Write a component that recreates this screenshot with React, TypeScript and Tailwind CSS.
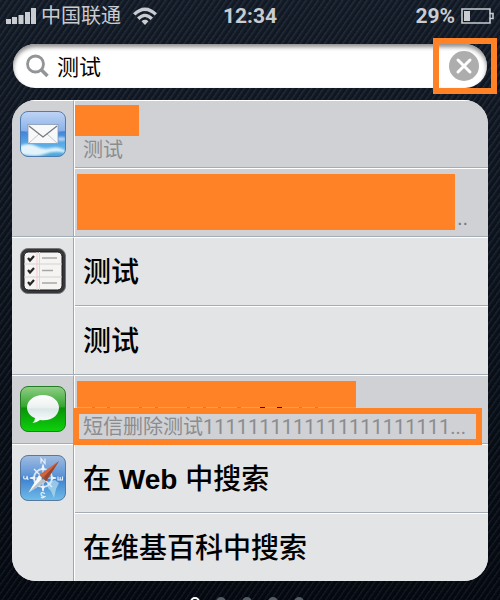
import { useState } from "react";
import type { ReactNode } from "react";

function SignalIcon() {
    return (
        <svg viewBox="0 0 31 16" className="h-4 w-[31px] fill-[#c9ccd1]" aria-hidden="true">
            <rect x="0" y="11" width="5" height="5" />
            <rect x="6" y="9" width="5" height="7" />
            <rect x="12.500" y="7" width="5" height="9" />
            <rect x="19" y="4" width="5" height="12" />
            <rect x="25" y="0" width="5" height="16" />
        </svg>
    );
}

function WifiIcon() {
    return (
        <svg viewBox="0 0 24 18" className="h-[18px] w-6" fill="none" stroke="#c9ccd1" strokeWidth="3.4" aria-hidden="true">
            <path d="M1.200 7.400Q12 -3 22.800 7.400" />
            <path d="M5.200 11.800Q12 5 18.800 11.800" />
            <path d="M12 18L8.500 14.300Q12 11.400 15.500 14.300Z" fill="#c9ccd1" stroke="none" />
        </svg>
    );
}

function BatteryIcon() {
    return (
        <svg viewBox="0 0 33 16" className="h-4 w-[33px]" fill="none" aria-hidden="true">
            <path d="M1 1H29V5.5H32V10.5H29V15H1Z" stroke="#c9ccd1" strokeWidth="1.6" />
            <path d="M29 5.5V10.5" stroke="#c9ccd1" strokeWidth="1.4" />
            <rect x="3" y="3" width="6" height="10" fill="#c9ccd1" />
        </svg>
    );
}

function MailIcon() {
    return (
        <svg viewBox="0 0 46 46" className="size-[46px]" aria-hidden="true">
            <defs>
                <linearGradient id="mailSky" x1="0" y1="0" x2="0" y2="1">
                    <stop offset="0" stopColor="#b4cdf3" />
                    <stop offset="0.42" stopColor="#78a6e6" />
                    <stop offset="0.45" stopColor="#4484da" />
                    <stop offset="0.8" stopColor="#5fb4e9" />
                    <stop offset="1" stopColor="#4ba6dd" />
                </linearGradient>
                <clipPath id="mailClip"><rect x="1" y="1" width="44" height="44" rx="7" /></clipPath>
                <filter id="mailCloud"><feGaussianBlur stdDeviation="1.2" /></filter>
            </defs>
            <rect x="0.5" y="0.5" width="45" height="45" rx="7.5" fill="url(#mailSky)" stroke="#4d7db0" />
            <g clipPath="url(#mailClip)">
                <path d="M1 1H45V20Q23 27 1 20Z" fill="#fff" opacity="0.15" />
                <g filter="url(#mailCloud)" fill="#f3fbfd">
                    <path d="M0 35Q9 31 16 35T31 37T46 40V42Q34 39 25 43T0 43Z" opacity="0.9" />
                    <ellipse cx="41" cy="28" rx="5" ry="2" opacity="0.6" />
                </g>
            </g>
            <rect x="8" y="13.500" width="30" height="19" fill="#f7f8fa" stroke="#8090a5" strokeWidth="0.7" />
            <path d="M9 32L19 23M37 32L27 23" stroke="#b4b7bd" strokeWidth="0.8" />
            <path d="M9 15L23 26L37 15" fill="none" stroke="#77797d" strokeWidth="1.3" />
        </svg>
    );
}

function RemindersIcon() {
    return (
        <svg viewBox="0 0 46 46" className="size-[46px]" fill="none" aria-hidden="true">
            <rect x="0.5" y="0.5" width="45" height="45" rx="7.5" fill="#36373a" stroke="#777" />
            <rect x="4" y="4" width="38" height="38" rx="4.5" fill="#f5f4f3" stroke="#18191b" />
            <path d="M4 16H42M4 29H42" stroke="#d3d2d0" />
            <path d="M17 4V42M19.5 4V42" stroke="#f6c9cd" />
            <path d="M22 10H37M22 22.5H33M22 35H37" stroke="#a6a6a6" strokeWidth="1.7" />
            <path d="M8 10L10 12.500L14 8M8 22L10 24.500L14 20M8 34L10 36.500L14 32" stroke="#252525" strokeWidth="2.2" />
        </svg>
    );
}

function MessagesIcon() {
    return (
        <svg viewBox="0 0 46 46" className="size-[46px]" aria-hidden="true">
            <defs>
                <linearGradient id="smsGreen" x1="0" y1="0" x2="0" y2="1">
                    <stop offset="0" stopColor="#91cf87" />
                    <stop offset="0.45" stopColor="#35a52f" />
                    <stop offset="0.48" stopColor="#079307" />
                    <stop offset="1" stopColor="#0ed20c" />
                </linearGradient>
                <linearGradient id="smsBubble" x1="0" y1="0" x2="0" y2="1">
                    <stop offset="0" stopColor="#fff" />
                    <stop offset="0.45" stopColor="#eaf0ee" />
                    <stop offset="0.5" stopColor="#dae6e7" />
                    <stop offset="1" stopColor="#fff" />
                </linearGradient>
            </defs>
            <rect x="0.5" y="0.5" width="45" height="45" rx="7.5" fill="url(#smsGreen)" stroke="#267b26" />
            <path d="M23 9C14 9 7 14.500 7 21.500C7 26 10 30 15 32Q15 35 12.500 37Q17 36.500 20 34C32 35.500 39 29 39 21.500C39 14.500 32 9 23 9Z" fill="url(#smsBubble)" />
        </svg>
    );
}

function SafariIcon() {
    return (
        <svg viewBox="0 0 46 46" className="size-[46px]" fill="none" aria-hidden="true">
            <defs>
                <linearGradient id="safariSky" x1="0" y1="0" x2="0" y2="1">
                    <stop offset="0" stopColor="#a0bce1" />
                    <stop offset="0.45" stopColor="#5b93d6" />
                    <stop offset="0.5" stopColor="#3e7fce" />
                    <stop offset="1" stopColor="#70bde9" />
                </linearGradient>
            </defs>
            <rect x="0.5" y="0.5" width="45" height="45" rx="7.5" fill="url(#safariSky)" stroke="#58799c" />
            <path d="M27 27L35 25L39 28L36 34L34 43L31 36L28 33Z" fill="#b4e0ef" opacity="0.7" />
            <circle cx="23" cy="23" r="9" stroke="#d5e5f5" strokeWidth="2" />
            <path d="M23 10V36M10 23H36M14 14L32 32" stroke="#e6f0f9" strokeWidth="1.2" />
            <path d="M23 8L25 15H21ZM23 37L21 31H25ZM9 23L15 21V25ZM37 23L31 25V21Z" fill="#edf5fb" />
            <path d="M21 8.500V3.500L25 8.500V3.500M25 38.500Q21 36.500 21 39T25 41.500Q23 44 21 42M4 21Q3 24 5 24T7 22T8 25M38 21.500V25H42.500V21.500M40.200 22V25" stroke="#e4effa" strokeWidth="1.2" />
            <path d="M39 6L19 20L26 26.500Z" fill="#d4633b" />
            <path d="M39 6L22.500 23.200L26 26.500Z" fill="#99452d" />
            <path d="M19 20L8.500 37.500L26 26.500Z" fill="#f8fbfd" />
            <path d="M22.500 23.200L8.500 37.500L26 26.500Z" fill="#b8c2cd" />
            <circle cx="23" cy="23" r="1.500" fill="#637181" />
        </svg>
    );
}

function StatusBar() {
    return (
        <header className="grid h-8 shrink-0 grid-cols-3 items-center px-1.5 font-['Roboto','Noto_Sans_CJK_SC',sans-serif] text-xl leading-8 text-[#c9ccd1]">
            <div className="flex items-center">
                <SignalIcon />
                <span className="mr-3 ml-1 whitespace-nowrap">中国联通</span>
                <WifiIcon />
            </div>
            <span className="text-center text-[21px] font-bold">12:34</span>
            <div className="flex items-center justify-end gap-1.5">
                <span className="text-[21px] font-bold">29%</span>
                <BatteryIcon />
            </div>
        </header>
    );
}

function SearchBar() {
    const [query, setQuery] = useState("测试");
    return (
        <div className="relative mx-[13px] mt-3 flex h-11 shrink-0 items-center rounded-full bg-white pr-2 pl-3 shadow-[inset_0_3px_4px_#8c8c8c]">
            <svg viewBox="0 0 24 24" className="size-6" fill="none" stroke="#929497" aria-hidden="true">
                <circle cx="10.500" cy="10" r="8" strokeWidth="2.800" />
                <path d="M16 15.500L22.500 22" strokeWidth="3.600" />
            </svg>
            <input
                type="text"
                aria-label="搜索"
                className="ml-2 min-w-0 flex-1 bg-transparent pt-1 text-[22px] leading-8 text-black outline-none"
                value={query}
                onChange={(e) => setQuery(e.target.value)}
            />
            <button type="button" aria-label="清除" className="size-[30px] rounded-full bg-[#adadad]" onClick={() => setQuery("")}>
                <svg viewBox="0 0 30 30" fill="none" stroke="#fff" strokeWidth="3" strokeLinecap="round">
                    <path d="M9 9L21 21M21 9L9 21" />
                </svg>
            </button>
            <div className="pointer-events-none absolute -top-1.5 -right-2.5 -bottom-1.5 w-16 border-6 border-[#ff8227]" />
        </div>
    );
}

function Group({ icon, dark, children }: { icon: ReactNode; dark?: boolean; children: ReactNode }) {
    return (
        <section className={`flex border-b border-[#a4adb5] last:border-b-0 ${dark ? "bg-[#d0d1d4]" : "bg-[#e3e4e6]"}`}>
            <div className="flex w-[62px] shrink-0 justify-center border-t border-r border-t-white border-r-[#a0a6ad] pt-2.5">{icon}</div>
            <div className="min-w-0 flex-1 divide-y divide-[#a4adb5] border-l border-white">{children}</div>
        </section>
    );
}

function Row({ children }: { children: ReactNode }) {
    return <div className="relative min-h-17 shadow-[inset_0_1px_#fff]">{children}</div>;
}

function TitleRow({ children }: { children: ReactNode }) {
    return (
        <Row>
            <a href="#" className="block px-2 pt-4 pb-3 text-[28px] leading-10 font-medium text-black">{children}</a>
        </Row>
    );
}

// tops of the letters that show between the two covers
function TextRemnant() {
    return (
        <svg viewBox="0 0 279 2" className="ml-0.5 h-0.5 w-[279px] bg-[#ff9c52]" aria-hidden="true">
            <path d="M15 1H18M30 1H33M62 1H65M78 1H81M110 1H113M126 1H129M141 1H144M160 1H164M222 1H225M238 1H241" stroke="#b05a20" />
            <path d="M183 1H188M200 1H205" stroke="#3a1408" strokeWidth="2" />
        </svg>
    );
}

export default function App() {
    return (
        <main className="flex h-screen flex-col overflow-hidden bg-[#0a111c] bg-[repeating-linear-gradient(125deg,#ffffff0d_0px,#ffffff0d_1px,#00000000_2px,#00000040_4px,#00000000_5px),linear-gradient(#151e2b,#050a12)] font-['Liberation_Sans','Noto_Sans_CJK_SC',sans-serif]">
            <StatusBar />
            <SearchBar />
            <div className="mx-3 mt-3 shrink-0 overflow-hidden rounded-3xl bg-[#e3e4e6]">
                <Group icon={<MailIcon />} dark>
                    <Row>
                        <div className="pt-[5px]">
                            <div className="h-[31px] w-16 bg-[#ff8227]" />
                            <p className="px-2 text-xl leading-7 text-[#8b8c8e]">测试</p>
                        </div>
                    </Row>
                    <Row>
                        <div className="flex items-end gap-0.5 pt-1.5 pr-5 pl-0.5">
                            <div className="h-14 flex-1 bg-[#ff8227]" />
                            <span className="text-xl leading-6 text-[#77787b]">..</span>
                        </div>
                    </Row>
                </Group>
                <Group icon={<RemindersIcon />}>
                    <TitleRow>测试</TitleRow>
                    <TitleRow>测试</TitleRow>
                </Group>
                <Group icon={<MessagesIcon />} dark>
                    <Row>
                        <div className="pt-1.5">
                            <div className="ml-0.5 h-[26px] w-[279px] bg-[#ff8227]" />
                            <TextRemnant />
                            <p className="truncate pt-1 pr-1 pl-2 font-['Roboto','Noto_Sans_CJK_SC',sans-serif] text-xl leading-7 text-[#8b8c8e]">短信删除测试1111111111111111111111...</p>
                        </div>
                        <div className="pointer-events-none absolute top-[33px] right-1.5 -bottom-0.5 -left-0.5 z-10 border-6 border-[#ff8227]" />
                    </Row>
                </Group>
                <Group icon={<SafariIcon />}>
                    <TitleRow>在 <b>Web</b> 中搜索</TitleRow>
                    <TitleRow>在维基百科中搜索</TitleRow>
                </Group>
            </div>
            <div className="mt-4 flex shrink-0 justify-center gap-4 pr-1.5">
                <span className="size-2.5 rounded-full border-2 border-white" />
                <span className="size-2.5 rounded-full bg-[#555b63]" />
                <span className="size-2.5 rounded-full bg-[#555b63]" />
                <span className="size-2.5 rounded-full bg-[#555b63]" />
                <span className="size-2.5 rounded-full bg-[#555b63]" />
            </div>
        </main>
    );
}
